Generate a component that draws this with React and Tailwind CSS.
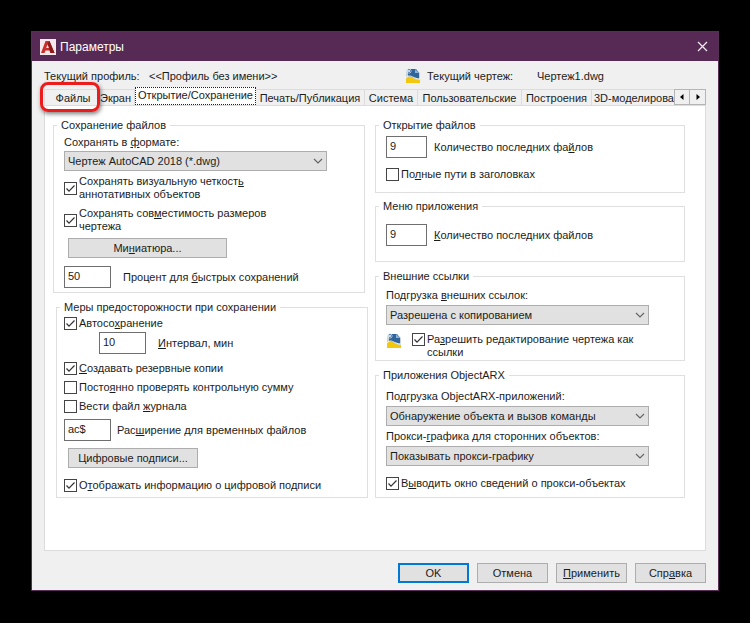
import React, { useState } from 'react';

const groupClass = 'min-w-0 border border-[#dfdfdf]';
const legendClass = '-ml-[7px] px-1 leading-[14px]';
const inputClass = 'h-[22px] rounded-none border border-[#6f6f6f] bg-white px-[3px] pb-[3px] leading-[14px] outline-none';
const buttonClass = 'h-5 border border-[#adadad] bg-[#e1e1e1] text-center leading-[14px]';

function AppLogo() {
    return (
        <svg className="h-4 w-4 shrink-0" viewBox="0 0 16 16" aria-hidden="true">
            <rect width="16" height="16" fill="#f6e9ec" />
            <path d="M5.5 2h4L14.5 14h-4l-1-2.5H5.5l-1 2.5H1z" fill="#c8312b" />
            <path d="M9.5 2l5 12h-4L7.5 4.5z" fill="#8c1a1c" />
            <path d="M6.2 9h2.7L7.6 5.5z" fill="#f6e9ec" />
        </svg>
    );
}

function DrawingIcon() {
    return (
        <svg className="h-4 w-4 shrink-0" viewBox="0 0 16 16" aria-hidden="true">
            <path d="M2 1h9l4 4v10H1V5z" fill="#c9d3da" />
            <path d="M3 1h8l3 4v6L9 10 3 8z" fill="#2f659c" />
            <path d="M10 1v4h4z" fill="#8fb2cf" />
            <path d="M4 0v6M1 3h6M2 1l4 4M6 1 2 5" stroke="#d4e4f2" strokeWidth=".7" />
            <path d="M1 11c3-5 6-1 9 0 2 .7 3 1 5 1v3H1z" fill="#f3c70d" />
            <path d="M1 10c3-4 6-1 9 0 2 .7 3 1 5 1" fill="none" stroke="#f7f4e2" />
        </svg>
    );
}

// Underlines the access key letter, marked with & in the text
function Key({ text }) {
    const i = text.indexOf('&');
    if (i < 0) return <span>{text}</span>;
    return (
        <span>
            {text.slice(0, i)}
            <u>{text[i + 1]}</u>
            {text.slice(i + 2)}
        </span>
    );
}

function Check({ text, checked = false, className = '' }) {
    const [on, setOn] = useState(checked);
    return (
        <label className={`flex gap-[2px] ${className}`}>
            <span className="grid h-[13px] w-[13px] shrink-0">
                <input
                    type="checkbox"
                    checked={on}
                    onChange={(e) => setOn(e.target.checked)}
                    className="col-start-1 row-start-1 h-[13px] w-[13px] appearance-none border border-[#444] bg-white"
                />
                {on && (
                    <svg className="pointer-events-none col-start-1 row-start-1 h-[13px] w-[13px]" viewBox="0 0 13 13">
                        <path d="M2.5 6.5 5 9.2l5.5-5.7" fill="none" stroke="#333" strokeWidth="1.2" />
                    </svg>
                )}
            </span>
            <Key text={text} />
        </label>
    );
}

function Combo({ id, value }) {
    return (
        <div className="grid h-5 w-[263px] max-w-full">
            <select
                id={id}
                className="col-start-1 row-start-1 h-5 w-full appearance-none border border-[#adadad] bg-[#e1e1e1] px-[3px] leading-[14px] outline-none"
            >
                <option>{value}</option>
            </select>
            <svg
                className="pointer-events-none col-start-1 row-start-1 mr-1 h-2 w-[10px] self-center justify-self-end"
                viewBox="0 0 10 8"
            >
                <path d="m1 2 4 4 4-4" fill="none" stroke="#666" strokeWidth="1.2" />
            </svg>
        </div>
    );
}

const tabs = [
    { name: 'Экран', width: 'w-[38px]' },
    { name: 'Открытие/Сохранение', width: 'w-[121px]' },
    { name: 'Печать/Публикация', width: 'w-[109px]' },
    { name: 'Система', width: 'w-[53px]' },
    { name: 'Пользовательские', width: 'w-[104px]' },
    { name: 'Построения', width: 'w-[70px]' },
];

function TabBar() {
    const [active, setActive] = useState('Открытие/Сохранение');
    return (
        <div className="relative flex h-[18px] items-end">
            <div role="tablist" className="flex min-w-0 flex-1 items-end overflow-hidden whitespace-nowrap">
                <button type="button" role="tab" className="h-4 w-[53px] shrink-0 border-t border-l border-[#dcdcdc] pl-1 leading-[14px]">
                    Файлы
                </button>
                {tabs.map((tab) => (
                    <button
                        key={tab.name}
                        type="button"
                        role="tab"
                        aria-selected={active === tab.name}
                        onClick={() => setActive(tab.name)}
                        className={`shrink-0 leading-[14px] ${tab.width} ${
                            active === tab.name
                                ? 'h-[18px] border border-dotted border-[#222] bg-white pb-1'
                                : 'h-4 border-t border-r border-[#dcdcdc]'
                        }`}
                    >
                        {tab.name}
                    </button>
                ))}
                <button type="button" role="tab" className="h-4 shrink-0 border-t border-[#dcdcdc] pl-[2px] leading-[14px]">
                    3D-моделирова
                </button>
            </div>
            <button type="button" aria-label="Назад" className="grid h-4 w-4 place-items-center border border-[#b5b5b5]">
                <svg className="h-[6px] w-[6px]" viewBox="0 0 6 6"><path d="M4.5 0v6L1 3z" /></svg>
            </button>
            <button type="button" aria-label="Вперед" className="grid h-4 w-4 place-items-center border border-l-0 border-[#b5b5b5]">
                <svg className="h-[6px] w-[6px]" viewBox="0 0 6 6"><path d="M1.5 0v6L5 3z" /></svg>
            </button>
            {/* Red highlight around the first tab */}
            <div className="pointer-events-none absolute -top-[5px] -left-1 h-[30px] w-[60px] rounded-lg border-[3px] border-[#ec1c1c] shadow-[1px_2px_4px_rgba(0,0,0,0.5)]" />
        </div>
    );
}

function LeftColumn() {
    return (
        <div className="flex flex-[315] flex-col">
            <fieldset className={`${groupClass} mr-[3px] px-[10px] pb-1`}>
                <legend className={legendClass}>Сохранение файлов</legend>
                <label htmlFor="format" className="mt-[3px] block leading-[14px]"><Key text="Сохранять в &формате:" /></label>
                <div className="mt-[2px]"><Combo id="format" value="Чертеж AutoCAD 2018 (*.dwg)" /></div>
                <Check checked className="mt-1 w-52 items-center leading-[13px]" text="Сохранять визуальную четкост&ь аннотативных объектов" />
                <Check checked className="mt-[6px] w-52 items-center leading-[13px]" text="Сохранять сов&местимость размеров чертежа" />
                <button type="button" className={`${buttonClass} mt-[5px] ml-1 block w-[159px]`}><Key text="Ми&ниатюра..." /></button>
                <div className="mt-2 flex items-center gap-3">
                    <input id="percent" defaultValue="50" className={`${inputClass} w-[47px]`} />
                    <label htmlFor="percent"><Key text="Процент для &быстрых сохранений" /></label>
                </div>
            </fieldset>
            <fieldset className={`${groupClass} mt-[7px] ml-[3px] px-[7px] pb-[5px]`}>
                <legend className="-ml-1 px-1 leading-[14px]">Меры предосторожности при сохранении</legend>
                <Check checked className="mt-[2px] items-center leading-[14px]" text="Автосо&хранение" />
                <div className="mt-[2px] ml-[35px] flex items-center gap-3">
                    <input id="interval" defaultValue="10" className={`${inputClass} w-[47px]`} />
                    <label htmlFor="interval"><Key text="&Интервал, мин" /></label>
                </div>
                <Check checked className="mt-[7px] items-center leading-[14px]" text="&Создавать резервные копии" />
                <Check className="mt-[5px] items-center leading-[14px]" text="Посто&янно проверять контрольную сумму" />
                <Check className="mt-[5px] items-center leading-[14px]" text="Вести файл &журнала" />
                <div className="mt-[6px] flex items-center gap-[6px]">
                    <input id="extension" defaultValue="ac$" className={`${inputClass} w-[47px]`} />
                    <label htmlFor="extension"><Key text="Рас&ширение для временных файлов" /></label>
                </div>
                <button type="button" className={`${buttonClass} mt-[7px] ml-1 block w-[130px]`}>Цифровые подписи...</button>
                <Check checked className="mt-[10px] items-center leading-[14px]" text="О&тображать информацию о цифровой подписи" />
            </fieldset>
        </div>
    );
}

function RightColumn() {
    return (
        <div className="flex flex-[310] flex-col">
            <fieldset className={`${groupClass} px-[10px] pb-[11px]`}>
                <legend className={legendClass}>Открытие файлов</legend>
                <div className="mt-1 flex items-center gap-[7px]">
                    <input id="recent" defaultValue="9" className={`${inputClass} w-[41px]`} />
                    <label htmlFor="recent"><Key text="Количество последних фа&йлов" /></label>
                </div>
                <Check className="mt-[9px] items-center leading-[14px]" text="По&лные пути в заголовках" />
            </fieldset>
            <fieldset className={`${groupClass} mt-[6px] px-[10px] pb-[15px]`}>
                <legend className={legendClass}>Меню приложения</legend>
                <div className="mt-[11px] flex items-center gap-[7px]">
                    <input id="menu-recent" defaultValue="9" className={`${inputClass} w-[41px]`} />
                    <label htmlFor="menu-recent"><Key text="&Количество последних файлов" /></label>
                </div>
            </fieldset>
            <fieldset className={`${groupClass} mt-[7px] px-[10px] pb-px`}>
                <legend className={legendClass}>Внешние ссылки</legend>
                <label htmlFor="xrefs" className="mt-[5px] block leading-[14px]"><Key text="Подгрузка &внешних ссылок:" /></label>
                <div className="mt-[3px]"><Combo id="xrefs" value="Разрешена с копированием" /></div>
                <div className="mt-2 flex items-start gap-[10px]">
                    <DrawingIcon />
                    <Check checked className="w-60 items-start leading-[13px]" text="Ра&зрешить редактирование чертежа как ссылки" />
                </div>
            </fieldset>
            <fieldset className={`${groupClass} mt-[7px] px-[10px] pb-[7px]`}>
                <legend className={legendClass}>Приложения ObjectARX</legend>
                <label htmlFor="arx" className="mt-[7px] block leading-[14px]"><Key text="По&дгрузка ObjectARX-приложений:" /></label>
                <div className="mt-[3px]"><Combo id="arx" value="Обнаружение объекта и вызов команды" /></div>
                <label htmlFor="proxy" className="mt-[3px] block leading-[14px]"><Key text="Прокси-&графика для сторонних объектов:" /></label>
                <div className="mt-[3px]"><Combo id="proxy" value="Показывать прокси-графику" /></div>
                <Check checked className="mt-[10px] items-center leading-[14px]" text="В&ыводить окно сведений о прокси-объектах" />
            </fieldset>
        </div>
    );
}

function App() {
    return (
        <div className="min-h-screen bg-black px-[31px] py-[31px] font-['Liberation_Sans',Arial,sans-serif] text-[11px] leading-[14px] text-[#1c1c1c]">
            <div className="border border-[#5a2d58] bg-[#f0f0f0]">
                <header className="flex h-[29px] items-center gap-1 bg-[#572a56] px-2 text-white">
                    <AppLogo />
                    <h1 className="flex-1 text-xs">Параметры</h1>
                    <button type="button" aria-label="Закрыть" className="grid h-4 w-4 place-items-center">
                        <svg className="h-[11px] w-[11px]" viewBox="0 0 11 11">
                            <path d="m1 1 9 9M10 1l-9 9" stroke="#efe6ee" strokeWidth="1.3" />
                        </svg>
                    </button>
                </header>
                <div className="px-3 pb-[7px]">
                    <div className="flex h-[26px] items-center pt-1">
                        <span className="w-[105px]">Текущий профиль:</span>
                        <span className="flex-1">&lt;&lt;Профиль без имени&gt;&gt;</span>
                        <DrawingIcon />
                        <span className="ml-[6px] w-[110px]">Текущий чертеж:</span>
                        <span className="w-[169px]">Чертеж1.dwg</span>
                    </div>
                    <TabBar />
                    <main className="flex gap-[7px] border border-[#dcdcdc] bg-white pt-3 pr-5 pb-[52px] pl-2">
                        <LeftColumn />
                        <RightColumn />
                    </main>
                    <footer className="mt-3 flex justify-end gap-2">
                        <button type="button" className="h-5 w-[71px] border-2 border-[#0078d7] bg-[#e1e1e1] leading-[14px]">OK</button>
                        <button type="button" className={`${buttonClass} w-[71px]`}>Отмена</button>
                        <button type="button" className={`${buttonClass} w-[71px]`}><Key text="&Применить" /></button>
                        <button type="button" className={`${buttonClass} w-[71px]`}><Key text="Спр&авка" /></button>
                    </footer>
                </div>
            </div>
        </div>
    );
}

export default App;
